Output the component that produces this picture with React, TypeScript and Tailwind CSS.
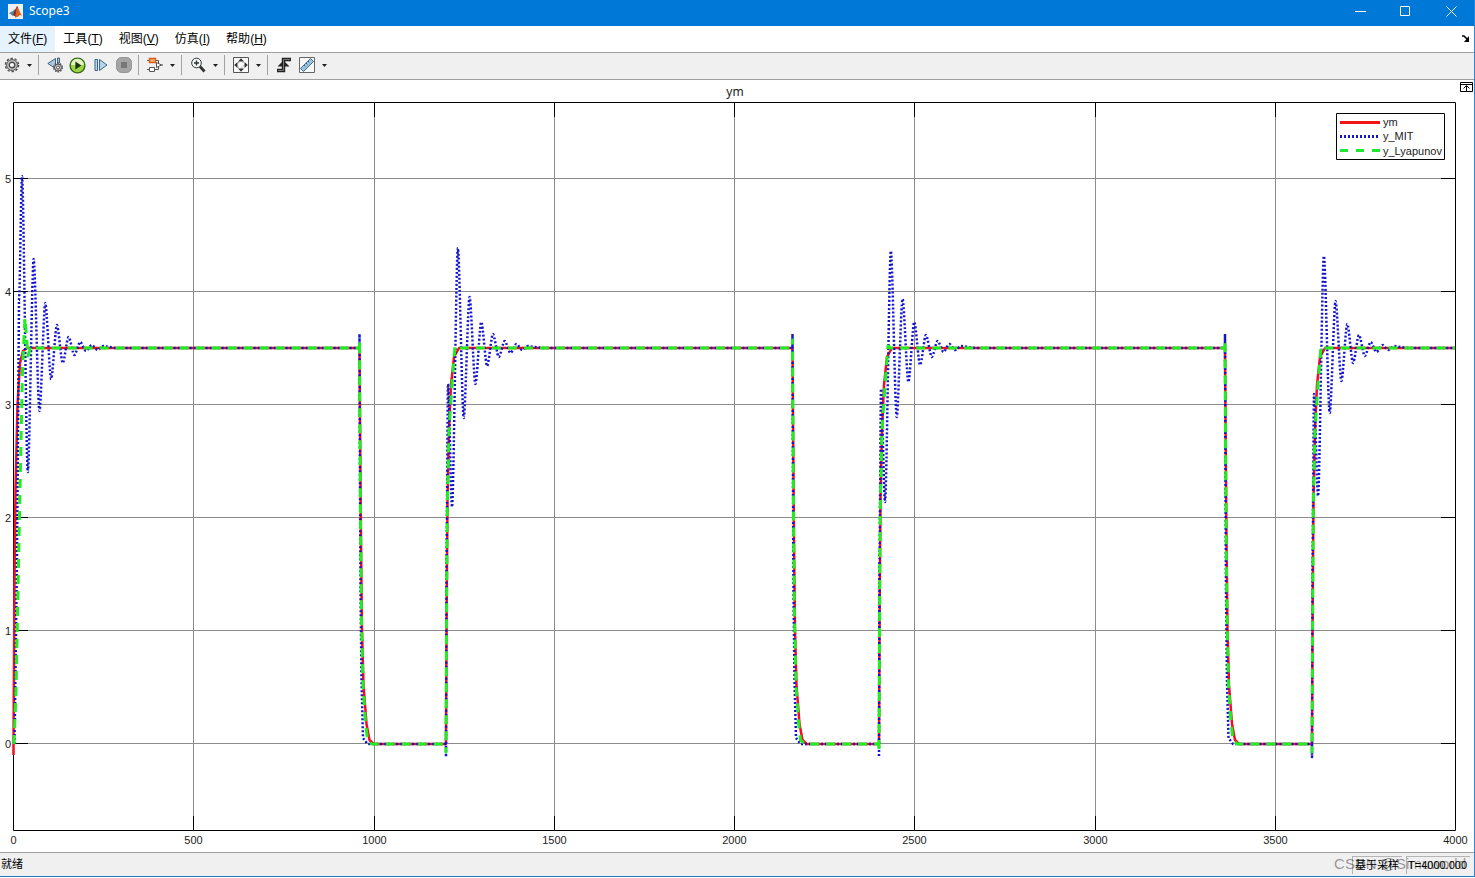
import type { ReactNode } from "react";

type Point = [number, number];

const ZERO = 744;

const menus = [
  { label: "文件", key: "F" },
  { label: "工具", key: "T" },
  { label: "视图", key: "V" },
  { label: "仿真", key: "I" },
  { label: "帮助", key: "H" },
];

const xTicks = [0, 500, 1000, 1500, 2000, 2500, 3000, 3500, 4000];
const yTicks = [0, 1, 2, 3, 4, 5];

const toX = (value: number) => Math.round(13 + value * 0.3605) + 0.5;
const toY = (value: number) => Math.round(ZERO - value * 113.1) - 0.5;

// offsets from each falling / rising edge
const redFall: Point[] = [[0, 348], [0.5, 420], [1.5, 540], [2.5, 630], [4, 685], [7, 724], [10, 740], [14, 744]];
const redRise: Point[] = [[0, 744], [0.7, 600], [1.5, 500], [3, 430], [5, 385], [8, 357], [13, 348]];
const greenFall: Point[] = [[0, 340], [0.4, 420], [1.2, 540], [2, 620], [3.5, 685], [6, 722], [8, 740], [12, 744]];
const greenRise: Point[] = [[0, 744], [0, 752], [0.5, 640], [1.2, 510], [3, 430], [6, 385], [9, 346], [12, 348]];
const blueFall: Point[] = [[0, 334], [0.5, 480], [1, 590], [2, 680], [3.5, 738], [8, 744]];

const edges = [
  { fall: 359.5, rise: 446, swings: [384, 507, 248, 418, 297, 384, 322, 366, 334, 357, 341, 353, 344, 350, 346] },
  { fall: 792.5, rise: 879, swings: [389, 502, 251, 417, 299, 382, 322, 365, 335, 357, 341, 352, 344, 350, 346] },
  { fall: 1225, rise: 1312, swings: [394, 496, 256, 413, 301, 381, 324, 363, 335, 356, 342, 352, 345, 350, 346] },
];
const firstSwings = [176, 472, 259, 411, 303, 379, 325, 363, 337, 355, 342, 351, 345, 350, 346];

const line = (points: Point[]) => points.map(([x, y]) => `L${x} ${y}`).join("");
const shift = (points: Point[], dx: number) => line(points.map(([x, y]): Point => [x + dx, y]));

function swing(points: Point[]) {
  return points
    .slice(1)
    .map(([x, y], i) => {
      const [px, py] = points[i];
      const bend = (x - px) * 0.28;
      return `C${px + bend} ${py} ${x - bend} ${y} ${x} ${y}`;
    })
    .join("");
}

const redPath =
  "M13.5 755L13.5 744L14.5 580L15.5 490L17.5 405L20 363L23 351L27 348" +
  edges.map((e) => shift(redFall, e.fall) + shift(redRise, e.rise)).join("") +
  "L1455 348";

const greenPath =
  "M14 744L16 690L18 590L20 490L22.5 370L25 318L28 356L31 346L34 348" +
  edges.map((e) => `L${e.fall} 348` + shift(greenFall, e.fall) + shift(greenRise, e.rise)).join("") +
  "L1455 348";

const bluePath =
  "M14.5 744L17 560L19 300" +
  swing([[19, 300], ...firstSwings.map((y, i): Point => [22 + i * 5.82, y])]) +
  "L115 348" +
  edges
    .map((e) => {
      const points = e.swings.map((y, i): Point => [e.rise + (i === 0 ? 2 : 6 + (i - 1) * 5.85), y]);
      return (
        `L${e.fall} 348` +
        shift(blueFall, e.fall) +
        `L${e.rise} 744L${e.rise} 757L${e.rise + 0.5} 560` +
        swing([[e.rise + 0.5, 560], ...points]) +
        `L${e.rise + 96} 348`
      );
    })
    .join("") +
  "L1455 348";

function Caret() {
  return (
    <svg className="h-[3px] w-[5px]" viewBox="0 0 5 3">
      <path d="M0 0h5L2.5 3z" fill="#222" />
    </svg>
  );
}

function Tool({ label, menu, disabled, children }: { label: string; menu?: boolean; disabled?: boolean; children: ReactNode }) {
  return (
    <div className="flex items-center">
      <button type="button" aria-label={label} disabled={disabled} className="flex h-5 w-[23px] items-center justify-center">
        {children}
      </button>
      {menu && (
        <button type="button" aria-label={`${label} 选项`} className="flex h-5 w-3 items-center justify-center">
          <Caret />
        </button>
      )}
    </div>
  );
}

function Separator() {
  return <div className="mr-1 ml-[3px] h-5 w-px bg-[#a3a3a3]" />;
}

function TitleBar() {
  return (
    <header className="flex h-[26px] items-center bg-[#0078d7] pl-2 text-white">
      <svg className="mb-1 h-[15px] w-[15px]" viewBox="0 0 15 15">
        <path d="M0 0h15v15H0z" fill="#eef0f2" />
        <path d="M1 9l4-2 2-2 1 4-3 3z" fill="#4c86a8" />
        <path d="M5 11l2-5 2-4 1 1 1 9-3 1z" fill="#8f2a17" />
        <path d="M9 2l2 4 3 6-2-1-3 2-2 1 1-6z" fill="#dc6423" />
      </svg>
      <h1 className="mb-1 ml-[6px] flex-1 font-['Noto_Sans','Open_Sans',sans-serif] text-[12px]">Scope3</h1>
      <button type="button" aria-label="最小化" className="mb-1 flex h-5 w-[46px] items-center justify-center">
        <svg className="h-[11px] w-[11px]" viewBox="0 0 11 11" stroke="white">
          <path d="M0 5.5h11" />
        </svg>
      </button>
      <button type="button" aria-label="最大化" className="mb-1 flex h-5 w-[45px] items-center justify-center">
        <svg className="h-[11px] w-[11px]" viewBox="0 0 11 11" stroke="white" fill="none">
          <path d="M.5.5h9v9h-9z" />
        </svg>
      </button>
      <button type="button" aria-label="关闭" className="mb-1 flex h-5 w-[46px] items-center justify-center">
        <svg className="h-[11px] w-[11px]" viewBox="0 0 11 11" stroke="white">
          <path d="M.5.5l10 10M10.5.5l-10 10" />
        </svg>
      </button>
    </header>
  );
}

function MenuBar() {
  return (
    <nav className="flex h-[26px] items-stretch bg-white text-[12px]">
      {menus.map((m, i) => (
        <button key={m.key} type="button" className={i === 0 ? "bg-[#e5f3ff] px-2" : "px-2"}>
          {m.label}(<span className="underline">{m.key}</span>)
        </button>
      ))}
      <button type="button" aria-label="停靠" className="ml-auto px-1">
        <svg className="h-2 w-2" viewBox="0 0 8 8">
          <path d="M0 1h2l3 3" fill="none" stroke="#000" strokeWidth="1.5" />
          <path d="M7 1v6H2z" />
        </svg>
      </button>
    </nav>
  );
}

function Toolbar() {
  return (
    <div role="toolbar" aria-label="示波器工具栏" className="flex h-7 items-center border-y border-[#a0a0a0] bg-[#f0f0f0] pb-0.5">
      <Tool label="配置属性" menu>
        <svg className="h-4 w-4" viewBox="0 0 16 16" fill="none" stroke="#4b4b4b">
          <circle cx="8" cy="8" r="6.6" strokeWidth="1.4" strokeDasharray="2.4 1.8" />
          <circle cx="8" cy="8" r="5.4" fill="#c9c9c9" />
          <circle cx="8" cy="8" r="2.8" fill="#fafafa" strokeWidth="1.4" />
        </svg>
      </Tool>
      <Separator />
      <Tool label="步退选项">
        <svg className="h-4 w-4" viewBox="0 0 16 16" fill="none">
          <path d="M8.5 1.5v10L.8 6.5z" fill="#a9c9e2" stroke="#45627c" />
          <path d="M10.5 1v5h2V1z" fill="#a9c9e2" stroke="#45627c" />
          <circle cx="11" cy="10.5" r="4.3" stroke="#4b4b4b" strokeWidth="1.2" strokeDasharray="1.7 1" />
          <circle cx="11" cy="10.5" r="3.5" fill="#c9c9c9" stroke="#4b4b4b" />
          <circle cx="11" cy="10.5" r="1.5" fill="#fff" stroke="#4b4b4b" />
        </svg>
      </Tool>
      <Tool label="运行">
        <svg className="h-[17px] w-[17px]" viewBox="0 0 17 17">
          <circle cx="8.5" cy="8.5" r="7.4" fill="#9ed446" stroke="#376b1c" strokeWidth="1.4" />
          <path d="M2.2 8a6.3 6.3 0 0 1 12.6 0z" fill="#e2f3bd" />
          <path d="M6.4 4.5v8l6-4z" fill="#163412" />
        </svg>
      </Tool>
      <Tool label="步进">
        <svg className="h-[14px] w-[14px]" viewBox="0 0 14 14" fill="#b5d5ec" stroke="#3f6689">
          <path d="M1 1.5h2.5v11H1zM5.5 1.5v11L13 7z" />
        </svg>
      </Tool>
      <Tool label="停止" disabled>
        <svg className="h-4 w-4" viewBox="0 0 16 16">
          <rect x=".5" y=".5" width="15" height="15" rx="5" fill="#a4a4a4" stroke="#949494" />
          <path d="M5 5h6v6H5z" fill="#777" />
        </svg>
      </Tool>
      <Separator />
      <Tool label="在模型中突出显示" menu>
        <svg className="h-4 w-4" viewBox="0 0 16 16" fill="none" stroke="#555">
          <path d="M0 3.5h8M8 3.5h3.5v3M0 12.5h8M8 12.5h3.5v-3M14 8h2" />
          <path d="M2.5 1.5h6v4h-6z" fill="#f9b070" stroke="#d95b13" strokeWidth="1.3" />
          <path d="M2.5 10.5h5v4h-5z" fill="#fff" />
          <path d="M9.5 5.5v5l5-2.5z" fill="#fff" />
        </svg>
      </Tool>
      <Separator />
      <Tool label="放大" menu>
        <svg className="h-4 w-4" viewBox="0 0 16 16" fill="none" stroke="#333">
          <circle cx="6.5" cy="6" r="4.8" fill="#f5fafc" />
          <path d="M4 6h5M6.5 3.5v5" strokeWidth="1.4" />
          <path d="M10 9.5l4.5 5" strokeWidth="2.8" />
        </svg>
      </Tool>
      <Separator />
      <Tool label="缩放以适应" menu>
        <svg className="h-4 w-4" viewBox="0 0 16 16">
          <path d="M.5.5h15v15H.5z" fill="#fafafa" stroke="#555" />
          <path d="M8 1.2l3 3.3H5zM8 14.800l3-3.300H5zM1.200 8l3.300-3v6zM14.800 8l-3.300-3v6z" fill="#333" />
          <path d="M5 5h6v6H5z" fill="none" stroke="#888" strokeDasharray="1.5 3" />
        </svg>
      </Tool>
      <Separator />
      <Tool label="触发器">
        <svg className="h-4 w-4" viewBox="0 0 16 16" fill="none">
          <path d="M1 13.5h6.5v-11H15" stroke="#222" strokeWidth="3.4" />
          <path d="M1.5 9.5l6-6 6 6z" fill="#222" />
          <path d="M2 13.5h5.5v-11H14" stroke="#777" />
        </svg>
      </Tool>
      <Tool label="游标测量" menu>
        <svg className="h-4 w-4" viewBox="0 0 16 16">
          <path d="M.5.5h15v15H.5z" fill="#f8f8f8" stroke="#666" />
          <path d="M1.5 11.5l10-10 3 3-10 10z" fill="#9cc5e2" stroke="#416887" />
          <path d="M5 8l1.5 1.5M7 6l1.5 1.5M9 4l1.5 1.5" stroke="#416887" />
        </svg>
      </Tool>
    </div>
  );
}

function ScopeChart() {
  return (
    <svg className="block w-full" viewBox="0 80 1474 772" role="img" aria-label="ym" fontFamily="Liberation Sans, Arial, sans-serif" fontSize="11" fill="#222">
      <g stroke="#8c8c8c">
        {xTicks.slice(1, -1).map((t) => (
          <path key={t} d={`M${toX(t)} 103V830`} />
        ))}
        {yTicks.map((t) => (
          <path key={t} d={`M14 ${toY(t)}H1455`} />
        ))}
      </g>
      <g stroke="#000" fill="none">
        <path d="M13.5 102.5H1455.5V830.5H13.5z" />
        {xTicks.slice(1, -1).map((t) => (
          <path key={t} d={`M${toX(t)} 103v14M${toX(t)} 830v-14`} />
        ))}
        {yTicks.map((t) => (
          <path key={t} d={`M14 ${toY(t)}h14M1455 ${toY(t)}h-14`} />
        ))}
      </g>
      <text x="735" y="96" textAnchor="middle" fontFamily="Noto Sans, sans-serif" fontSize="12">ym</text>
      {xTicks.map((t) => (
        <text key={t} x={toX(t)} y="844" textAnchor="middle">{t}</text>
      ))}
      {yTicks.map((t) => (
        <text key={t} x="11" y={toY(t) + 4} textAnchor="end">{t}</text>
      ))}
      <g fill="none" strokeWidth="2.5" strokeLinejoin="round">
        <path d={redPath} stroke="#f01020" />
        <path d={bluePath} stroke="#1515d0" strokeDasharray="2 2" />
        <path d={greenPath} stroke="#20ee20" strokeWidth="3" strokeDasharray="9 7" />
      </g>
      <path d="M1336.5 113.5h108v46h-108z" fill="#fff" stroke="#000" />
      <g strokeWidth="3">
        <path d="M1340 122.5h40" stroke="#f51414" />
        <path d="M1340 136.5h40" stroke="#1515c8" strokeDasharray="2 2" />
        <path d="M1340 150.5h40" stroke="#20e830" strokeDasharray="8 8" />
      </g>
      <text x="1383" y="126">ym</text>
      <text x="1383" y="140">y_MIT</text>
      <text x="1383" y="155">y_Lyapunov</text>
      <g fill="none" stroke="#000">
        <path d="M1460.5 82.5h12v9h-12zM1460 84.5h13M1466.5 91v-5M1463.5 88.5l3-3 3 3" />
      </g>
    </svg>
  );
}

function StatusBar() {
  return (
    <footer className="relative flex h-[25px] items-center border-t border-b border-t-[#a0a0a0] border-b-[#2478b8] bg-[#f0f0f0] pr-1 pl-px text-[11px]">
      <span className="flex-1">就绪</span>
      <span className="mr-1 flex h-[18px] w-[50px] items-center border-t border-l border-[#b4b4b4] pl-[2px] whitespace-nowrap">基于采样</span>
      <span className="flex h-[18px] w-[64px] items-center border-t border-l border-[#b4b4b4] pl-px whitespace-nowrap">T=4000.000</span>
      <span className="pointer-events-none absolute right-2 text-[15px] whitespace-nowrap text-black/40">CSDN @Simuworld</span>
    </footer>
  );
}

export default function App() {
  return (
    <div className="min-h-screen bg-white font-['Liberation_Sans','Noto_Sans_CJK_SC',sans-serif] text-black">
      <div className="border-r border-[#2888d8]">
        <TitleBar />
        <MenuBar />
        <Toolbar />
        <main>
          <ScopeChart />
        </main>
        <StatusBar />
      </div>
    </div>
  );
}
